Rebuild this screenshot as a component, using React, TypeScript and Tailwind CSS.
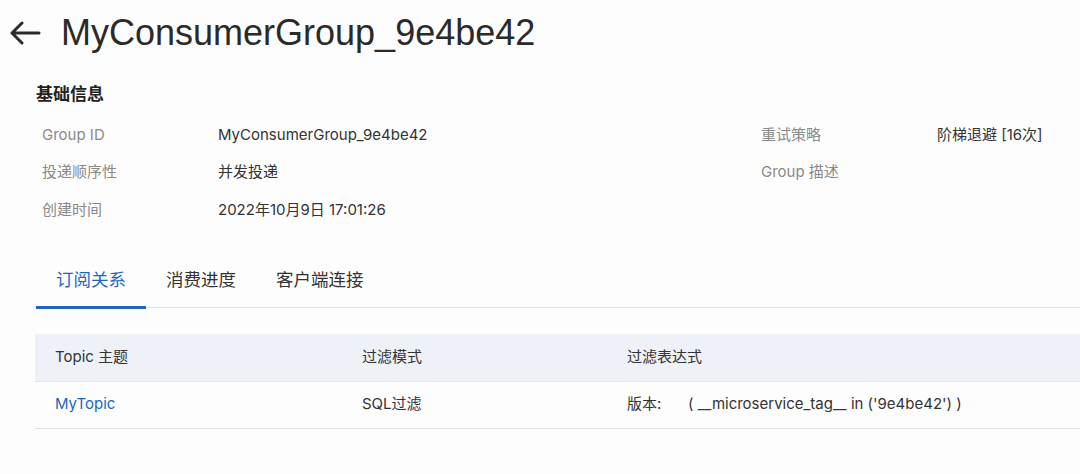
const FONT = { fontFamily: '"Liberation Sans", "Noto Sans CJK SC", sans-serif' };
const BODY = { fontFamily: 'Inter, "Noto Sans CJK SC", sans-serif' };

const LEFT_INFO = [
  { label: 'Group ID', value: 'MyConsumerGroup_9e4be42' },
  { label: '投递顺序性', value: '并发投递' },
  { label: '创建时间', value: '2022年10月9日 17:01:26' },
];

const RIGHT_INFO = [
  { label: '重试策略', value: '阶梯退避 [16次]' },
  { label: 'Group 描述', value: '' },
];

const TABS = ['订阅关系', '消费进度', '客户端连接'];

function BackArrow() {
  return (
    <svg width="32" height="24" viewBox="0 0 32 24" fill="none" className="text-[#2b2b2b]">
      <path d="M30 12H3M13 2L3 12l10 10" stroke="currentColor" strokeWidth="3" strokeLinecap="round" strokeLinejoin="round" />
    </svg>
  );
}

function InfoRows({ rows }: { rows: { label: string; value: string }[] }) {
  return (
    <div className="flex flex-col">
      {rows.map(r => (
        <div key={r.label} className="flex items-center h-[37.5px] text-[15px]">
          <span className="w-[176px] shrink-0 text-[#8a8a8a]">{r.label}</span>
          <span className="text-[#333]">{r.value}</span>
        </div>
      ))}
    </div>
  );
}

export default function App() {
  return (
    <div className="w-[1080px] h-[474px] overflow-hidden bg-[#fdfdfd]" style={FONT}>
      {/* Header */}
      <div className="flex items-center h-[66px] pl-[9px]">
        <BackArrow />
        <h1 className="ml-[20px] text-[36px] leading-none text-[#2a2a2a]">MyConsumerGroup_9e4be42</h1>
      </div>

      <div style={BODY}>
        {/* 基础信息 */}
        <div className="pl-[36px] mt-[16px]">
          <div className="text-[17px] leading-6 font-bold text-[#222]">基础信息</div>
          <div className="flex mt-[10px] pl-[6px]">
            <div className="w-[719px] shrink-0">
              <InfoRows rows={LEFT_INFO} />
            </div>
            <InfoRows rows={RIGHT_INFO} />
          </div>
        </div>

        {/* Tabs */}
        <div className="mt-[38px] ml-[36px] flex border-b border-[#e3e3e3]">
          {TABS.map((t, i) => (
            <div
              key={t}
              className={`px-[20px] pt-[1px] pb-[14px] text-[17.5px] leading-6 -mb-[2px] border-b-[3px] ${
                i === 0 ? 'text-[#1d66c0] border-[#1d66c0]' : 'text-[#333] border-transparent'
              }`}
            >
              {t}
            </div>
          ))}
        </div>

        {/* Table */}
        <div className="mt-[26px] ml-[35px] text-[15px]">
          <div className="grid grid-cols-[307px_265px_1fr] items-center h-[48px] bg-[#eef1f8] border-b border-[#e2e4e8] text-[#333]">
            <span className="pl-[20px]">Topic 主题</span>
            <span className="pl-[20px]">过滤模式</span>
            <span className="pl-[20px]">过滤表达式</span>
          </div>
          <div className="grid grid-cols-[307px_265px_1fr] items-center h-[47px] border-b border-[#e2e2e2] text-[#333]">
            <span className="pl-[20px] text-[#2067c2]">MyTopic</span>
            <span className="pl-[20px]">SQL过滤</span>
            <span className="pl-[20px] flex">
              <span className="w-[61px]">版本:</span>
              <span>( __microservice_tag__ in ('9e4be42') )</span>
            </span>
          </div>
        </div>
      </div>
    </div>
  );
}
